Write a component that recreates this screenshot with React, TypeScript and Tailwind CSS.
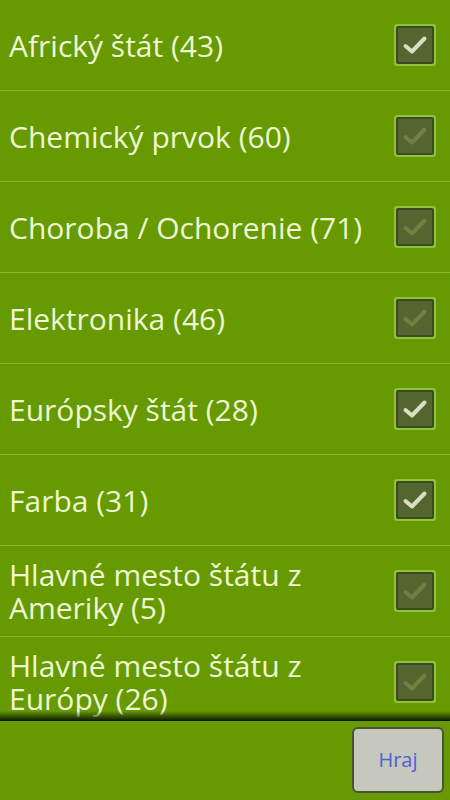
import React from "react";

const items: { label: string; checked: boolean }[] = [
  { label: "Africký štát (43)", checked: true },
  { label: "Chemický prvok (60)", checked: false },
  { label: "Choroba / Ochorenie (71)", checked: false },
  { label: "Elektronika (46)", checked: false },
  { label: "Európsky štát (28)", checked: true },
  { label: "Farba (31)", checked: true },
  { label: "Hlavné mesto štátu z Ameriky (5)", checked: false },
  { label: "Hlavné mesto štátu z Európy (26)", checked: false },
];

function Check({ checked }: { checked: boolean }) {
  return (
    <div className="w-[42px] h-[42px] rounded-[3px] bg-[#8fc43a] p-[2px] shrink-0">
      <div className="w-full h-full rounded-[2px] bg-[#3c4a22] p-[2px]">
        <div className="w-full h-full bg-[#55652f] flex items-center justify-center">
          <svg width="26" height="22" viewBox="0 0 26 22">
            <path
              d="M3.5 12 L10 17.5 L22.5 4.5"
              fill="none"
              stroke={checked ? "#d9dfc0" : "#6f8242"}
              strokeWidth="4"
              strokeLinecap="round"
              strokeLinejoin="round"
            />
          </svg>
        </div>
      </div>
    </div>
  );
}

export default function App() {
  return (
    <div
      className="w-[450px] h-[800px] bg-[#669a00] flex flex-col overflow-hidden"
      style={{ fontFamily: '"Open Sans", "Noto Sans", sans-serif' }}
    >
      <div className="relative h-[721px] overflow-hidden">
        {items.map((it, i) => (
          <div
            key={i}
            className="h-[91px] border-b border-[#84b830] flex items-center pl-[9px] pr-[14px]"
          >
            <div className="flex-1 text-[30px] leading-[33px] text-[#eef7d4] pr-4">
              {it.label}
            </div>
            <Check checked={it.checked} />
          </div>
        ))}
        <div className="absolute left-0 right-0 bottom-0 h-[10px] bg-gradient-to-b from-transparent to-[#0a1400]" />
      </div>
      <div className="flex-1 flex justify-end items-start pt-[6px] pr-[6px]">
        <div className="w-[92px] h-[66px] rounded-[6px] border-2 border-[#4c5238] bg-[#c6c7bd] flex items-center justify-center">
          <span className="text-[20px] text-[#4f5fd6]">Hraj</span>
        </div>
      </div>
    </div>
  );
}
